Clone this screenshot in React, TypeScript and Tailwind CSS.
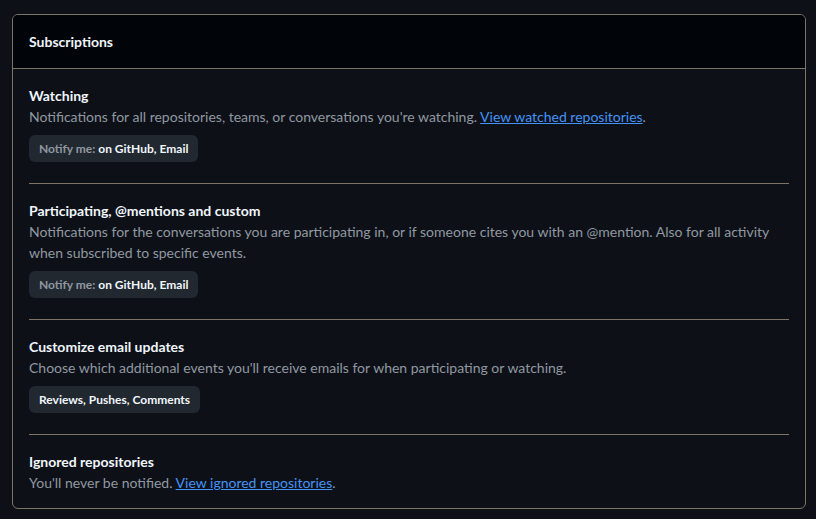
export default function App() {
  const font = { fontFamily: 'Lato, "Segoe UI", sans-serif' };
  return (
    <div className="min-h-[519px] w-[816px] bg-[#0d1117] pt-[14px] pl-[12px] pr-[10px]" style={font}>
      <div className="rounded-md border border-[#7d7468] bg-[#0d1117] overflow-hidden">
        <div className="h-[54px] flex items-center px-4 bg-[#010409] border-b border-[#7d7468]">
          <h2 className="text-sm font-bold text-[#f0f6fc]">Subscriptions</h2>
        </div>
        <div className="px-4">
          <section className="pt-4 pb-[21px] border-b border-[#7d7468]">
            <h3 className="text-sm font-bold leading-[21px] text-[#f0f6fc]">Watching</h3>
            <p className="text-sm leading-[21px] text-[#9198a1]">
              Notifications for all repositories, teams, or conversations you're watching.{" "}
              <a href="#" className="text-[#4493f8] underline">View watched repositories</a>.
            </p>
            <div className="mt-2 w-fit rounded-md bg-[#212830] px-[10px] py-[5px] text-xs font-bold leading-[17px] text-[#9198a1]">
              Notify me: <span className="text-[#f0f6fc]">on GitHub, Email</span>
            </div>
          </section>
          <section className="pt-4 pb-[21px] border-b border-[#7d7468]">
            <h3 className="text-sm font-bold leading-[21px] text-[#f0f6fc]">Participating, @mentions and custom</h3>
            <p className="text-sm leading-[21px] text-[#9198a1]">
              Notifications for the conversations you are participating in, or if someone cites you with an @mention. Also for all activity when subscribed to specific events.
            </p>
            <div className="mt-2 w-fit rounded-md bg-[#212830] px-[10px] py-[5px] text-xs font-bold leading-[17px] text-[#9198a1]">
              Notify me: <span className="text-[#f0f6fc]">on GitHub, Email</span>
            </div>
          </section>
          <section className="pt-4 pb-[21px] border-b border-[#7d7468]">
            <h3 className="text-sm font-bold leading-[21px] text-[#f0f6fc]">Customize email updates</h3>
            <p className="text-sm leading-[21px] text-[#9198a1]">
              Choose which additional events you'll receive emails for when participating or watching.
            </p>
            <div className="mt-2 w-fit rounded-md bg-[#212830] px-[10px] py-[5px] text-xs font-bold leading-[17px] text-[#f0f6fc]">
              Reviews, Pushes, Comments
            </div>
          </section>
          <section className="pt-4 pb-[15px]">
            <h3 className="text-sm font-bold leading-[21px] text-[#f0f6fc]">Ignored repositories</h3>
            <p className="text-sm leading-[21px] text-[#9198a1]">
              You'll never be notified.{" "}
              <a href="#" className="text-[#4493f8] underline">View ignored repositories</a>.
            </p>
          </section>
        </div>
      </div>
    </div>
  );
}
